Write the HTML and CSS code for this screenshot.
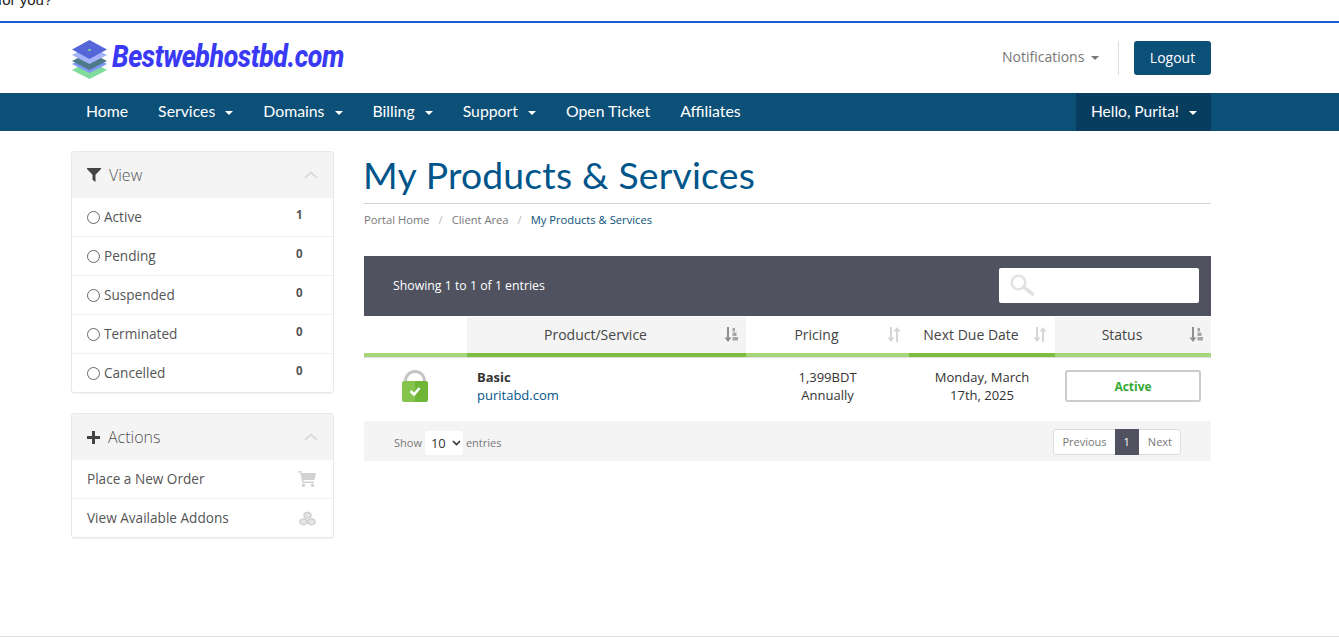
FILE: index.html
```html
<!DOCTYPE html>
<html lang="en">
<head>
    <meta charset="UTF-8">
    <meta name="viewport" content="width=device-width, initial-scale=1.0">
    <title>My Products &amp; Services</title>
    <link rel="stylesheet" href="styles.css">
</head>
<body>
    <div class="top-strip"><span>for you?</span></div>

    <header class="site-header">
        <div class="container header-row">
            <a class="logo" href="#">
                <svg class="logo-mark" width="37" height="40" viewBox="0 0 37 40">
                    <path d="M18.500 21 L36 30 L18.500 39 L1 30 Z" fill="#7fdc9c"/>
                    <path d="M18.500 15 L36 24 L18.500 33 L1 24 Z" fill="#7f96f5"/>
                    <path d="M18.500 12 L36 21 L18.500 30 L1 21 Z" fill="#4f7a8c"/>
                    <path d="M18.500 6 L36 15 L18.500 24 L1 15 Z" fill="#a5b4fa"/>
                    <path d="M18.500 0 L36 9.500 L18.500 19 L1 9.500 Z" fill="#5566d8"/>
                    <path d="M17 9 h3 v2 h-3 Z" fill="#6fc0a0"/>
                </svg>
                <span class="logo-text">Bestwebhostbd.com</span>
            </a>
            <div class="header-actions">
                <a class="notifications" href="#">Notifications <i class="caret"></i></a>
                <a class="btn-logout" href="#">Logout</a>
            </div>
        </div>
    </header>

    <nav class="main-nav">
        <div class="container nav-row">
            <ul class="nav-list">
                <li><a href="#">Home</a></li>
                <li><a href="#">Services <i class="caret"></i></a></li>
                <li><a href="#">Domains <i class="caret"></i></a></li>
                <li><a href="#">Billing <i class="caret"></i></a></li>
                <li><a href="#">Support <i class="caret"></i></a></li>
                <li><a href="#">Open Ticket</a></li>
                <li><a href="#">Affiliates</a></li>
            </ul>
            <a class="nav-user" href="#">Hello, Purita! <i class="caret"></i></a>
        </div>
    </nav>

    <div class="container page-body">
        <aside class="sidebar">
            <div class="panel">
                <div class="panel-heading">
                    <svg class="panel-icon" width="14" height="14" viewBox="0 0 14 14"><path d="M0 0 H14 V1 L8.500 6.800 V14 L5.500 11.800 V6.800 L0 1 Z" fill="#444"/></svg>
                    <span class="panel-title">View</span>
                    <svg class="panel-chevron" width="14" height="8" viewBox="0 0 14 8"><path d="M1 7 L7 1.500 L13 7" fill="none" stroke="#dcdcdc" stroke-width="2"/></svg>
                </div>
                <a class="panel-row" href="#"><i class="radio"></i><span class="row-label">Active</span><span class="count">1</span></a>
                <a class="panel-row" href="#"><i class="radio"></i><span class="row-label">Pending</span><span class="count">0</span></a>
                <a class="panel-row" href="#"><i class="radio"></i><span class="row-label">Suspended</span><span class="count">0</span></a>
                <a class="panel-row" href="#"><i class="radio"></i><span class="row-label">Terminated</span><span class="count">0</span></a>
                <a class="panel-row" href="#"><i class="radio"></i><span class="row-label">Cancelled</span><span class="count">0</span></a>
            </div>

            <div class="panel">
                <div class="panel-heading">
                    <svg class="panel-icon" width="13" height="13" viewBox="0 0 13 13"><path d="M5 0 H8 V5 H13 V8 H8 V13 H5 V8 H0 V5 H5 Z" fill="#444"/></svg>
                    <span class="panel-title">Actions</span>
                    <svg class="panel-chevron" width="14" height="8" viewBox="0 0 14 8"><path d="M1 7 L7 1.500 L13 7" fill="none" stroke="#dcdcdc" stroke-width="2"/></svg>
                </div>
                <a class="panel-row" href="#">
                    <span class="row-label">Place a New Order</span>
                    <svg class="row-icon" width="18" height="16" viewBox="0 0 18 16"><path d="M0 0 H3.200 L3.700 2 H18 L16.500 9 H5.200 L5.500 10.500 H16 V12 H4.200 L2.200 1.500 H0 Z" fill="#d2d2d2"/><circle cx="5.500" cy="14.300" r="1.700" fill="#d2d2d2"/><circle cx="14.500" cy="14.300" r="1.700" fill="#d2d2d2"/></svg>
                </a>
                <a class="panel-row" href="#">
                    <span class="row-label">View Available Addons</span>
                    <svg class="row-icon" width="17" height="15" viewBox="0 0 17 15"><g fill="#e4e4e4" stroke="#c4c4c4" stroke-width="1"><path d="M8.500 1 L12 2.500 V6 L8.500 7.500 L5 6 V2.500 Z"/><path d="M4.500 7.500 L8 9 V12.500 L4.500 14 L1 12.500 V9 Z"/><path d="M12.500 7.500 L16 9 V12.500 L12.500 14 L9 12.500 V9 Z"/></g></svg>
                </a>
            </div>
        </aside>

        <main class="content">
            <h1 class="page-title">My Products &amp; Services</h1>
            <ol class="breadcrumb">
                <li><a href="#">Portal Home</a></li>
                <li><a href="#">Client Area</a></li>
                <li class="current">My Products &amp; Services</li>
            </ol>

            <div class="table-bar">
                <span>Showing 1 to 1 of 1 entries</span>
                <label class="search-box">
                    <svg width="25" height="22" viewBox="0 0 25 22"><circle cx="8.500" cy="8.500" r="6.800" fill="none" stroke="#e2e2e2" stroke-width="2.600"/><path d="M13.500 13 L22.500 20" stroke="#e2e2e2" stroke-width="3.600" stroke-linecap="round"/></svg>
                </label>
            </div>

            <table class="services">
                <colgroup>
                    <col class="col-icon"><col class="col-product"><col class="col-price"><col class="col-date"><col class="col-status">
                </colgroup>
                <thead>
                    <tr>
                        <th></th>
                        <th class="shaded sorted">Product/Service
                            <svg class="sort" width="14" height="15" viewBox="0 0 14 15"><path d="M3 0 H5 V10.500 H7.500 L4 15 L0.500 10.500 H3 Z" fill="#8f8f8f"/><path d="M8.500 1 H11 V4.500 H8.500 Z M8.500 5.500 H12.500 V9 H8.500 Z M8.500 10 H14 V13.500 H8.500 Z" fill="#a6a6a6"/></svg>
                        </th>
                        <th>Pricing
                            <svg class="sort" width="14" height="15" viewBox="0 0 14 15"><path d="M3 0 H5 V10.500 H7.500 L4 15 L0.500 10.500 H3 Z M9 15 H11 V4.500 H13.500 L10 0 L6.500 4.500 H9 Z" fill="#d6d6d6"/></svg>
                        </th>
                        <th class="sorted">Next Due Date
                            <svg class="sort" width="14" height="15" viewBox="0 0 14 15"><path d="M3 0 H5 V10.500 H7.500 L4 15 L0.500 10.500 H3 Z M9 15 H11 V4.500 H13.500 L10 0 L6.500 4.500 H9 Z" fill="#d6d6d6"/></svg>
                        </th>
                        <th class="shaded">Status
                            <svg class="sort" width="14" height="15" viewBox="0 0 14 15"><path d="M3 0 H5 V10.500 H7.500 L4 15 L0.500 10.500 H3 Z" fill="#8f8f8f"/><path d="M8.500 1 H11 V4.500 H8.500 Z M8.500 5.500 H12.500 V9 H8.500 Z M8.500 10 H14 V13.500 H8.500 Z" fill="#a6a6a6"/></svg>
                        </th>
                    </tr>
                </thead>
                <tbody>
                    <tr>
                        <td class="lock-cell">
                            <svg width="26" height="32" viewBox="0 0 26 32"><path d="M3.500 14 V11 A9.500 9.500 0 0 1 22.500 11 V14" fill="none" stroke="#c4c4c4" stroke-width="3"/><path d="M13 11 H2 A2 2 0 0 0 0 13 V30 A2 2 0 0 0 2 32 H13 Z" fill="#84c44c"/><path d="M13 11 H24 A2 2 0 0 1 26 13 V30 A2 2 0 0 1 24 32 H13 Z" fill="#6fb637"/><path d="M8.500 21 L12 24.500 L17.500 18" fill="none" stroke="#fff" stroke-width="2.600"/></svg>
                        </td>
                        <td class="product-cell"><strong>Basic</strong><a href="#">puritabd.com</a></td>
                        <td class="center-cell">1,399BDT<br>Annually</td>
                        <td class="center-cell">Monday, March<br>17th, 2025</td>
                        <td class="status-cell"><span class="status-label">Active</span></td>
                    </tr>
                </tbody>
            </table>

            <div class="table-footer">
                <div class="length">Show <span class="length-select">10 <svg width="9" height="6" viewBox="0 0 9 6"><path d="M1 1 L4.500 4.500 L8 1" fill="none" stroke="#333" stroke-width="1.600"/></svg></span> entries</div>
                <div class="pager">
                    <a href="#">Previous</a><a class="active" href="#">1</a><a href="#">Next</a>
                </div>
            </div>
        </main>
    </div>

    <div class="footer-line"></div>
</body>
</html>
```

FILE: styles.css
```css
* {
    box-sizing: border-box;
}

html, body {
    height: 100%;
}

body {
    margin: 0;
    font-family: "Open Sans", sans-serif;
    font-size: 13px;
    color: #333;
    background-color: #fff;
    display: flex;
    flex-direction: column;
    overflow: hidden;
}

a {
    color: inherit;
    text-decoration: none;
}

.container {
    width: 1140px;
    margin-left: 71px;
}

.caret {
    display: inline-block;
    width: 0;
    height: 0;
    margin-left: 6px;
    vertical-align: middle;
    border-top: 4px solid currentColor;
    border-left: 4px solid transparent;
    border-right: 4px solid transparent;
}

/* top strip */
.top-strip {
    height: 23px;
    flex: none;
    overflow: hidden;
    border-bottom: 2px solid #1a5fd0;
    font-family: "Liberation Sans", sans-serif;
    font-size: 15px;
    color: #222;
}

.top-strip span {
    display: block;
    margin: -10px 0 0 -2px;
    line-height: 20px;
}

/* header */
.site-header {
    height: 70px;
    flex: none;
}

.header-row {
    height: 100%;
    display: flex;
    align-items: center;
    justify-content: space-between;
}

.logo {
    display: flex;
    align-items: center;
    gap: 3px;
    margin-top: 3px;
}

.logo-mark {
    margin-top: 1px;
}

.logo-text {
    display: block;
    font-family: Roboto, sans-serif;
    font-size: 32px;
    font-weight: 800;
    font-style: italic;
    color: #3a3af5;
    letter-spacing: -0.5px;
    margin-top: -7px;
    margin-left: 1px;
    transform: scaleX(0.835);
    transform-origin: left center;
}

.header-actions {
    display: flex;
    align-items: center;
}

.notifications {
    font-size: 14px;
    color: #777;
    padding-right: 19px;
    height: 34px;
    line-height: 32px;
    border-right: 1px solid #ddd;
    margin-right: 15px;
}

.notifications .caret {
    margin-left: 3px;
}

.btn-logout {
    width: 77px;
    height: 34px;
    line-height: 34px;
    text-align: center;
    font-size: 14px;
    font-weight: 500;
    color: #fff;
    background-color: #0c5078;
    border-radius: 3px;
}

/* main nav */
.main-nav {
    height: 38px;
    flex: none;
    background-color: #0c5078;
    color: #fff;
    font-family: Lato, sans-serif;
    font-size: 15.800px;
}

.nav-row {
    height: 100%;
    display: flex;
    justify-content: space-between;
}

.nav-list {
    display: flex;
    margin: 0;
    padding: 0;
    list-style: none;
}

.nav-list a, .nav-user {
    display: block;
    height: 38px;
    line-height: 36px;
    padding: 0 15px;
}

.nav-user {
    width: 135px;
    white-space: nowrap;
    font-size: 15.500px;
    background-color: #073e60;
}

/* page */
.page-body {
    flex: 1;
    display: flex;
    gap: 30px;
    padding-top: 20px;
    min-height: 0;
}

.sidebar {
    width: 263px;
    flex: none;
}

.panel {
    border: 1px solid #e8e8e8;
    border-radius: 3px;
    box-shadow: 0 1px 1px rgba(0, 0, 0, 0.05);
    margin-bottom: 20px;
}

.panel-heading {
    height: 46px;
    display: flex;
    align-items: center;
    padding: 0 15px;
    background-color: #f4f4f4;
    font-size: 16px;
    font-weight: 300;
    color: #555;
}

.panel-icon {
    margin-right: 8px;
}

.panel-title {
    flex: 1;
}

.panel-row {
    height: 39px;
    display: flex;
    align-items: center;
    padding: 0 15px;
    font-size: 13.600px;
    color: #555;
    border-top: 1px solid #f2f2f2;
}

.panel-heading + .panel-row {
    border-top: 0;
    height: 38px;
}

.row-label {
    flex: 1;
    padding-bottom: 2px;
}

.row-icon {
    margin-right: 2px;
}

.radio {
    width: 13px;
    height: 13px;
    margin-right: 4px;
    border: 1px solid #666;
    border-radius: 50%;
}

.count {
    width: 22px;
    margin-top: -5px;
    font-size: 11.500px;
    font-weight: 700;
    color: #555;
}

/* content */
.content {
    width: 847px;
    flex: none;
}

.page-title {
    margin: 0;
    height: 53px;
    line-height: 48px;
    font-family: Lato, sans-serif;
    font-size: 37.300px;
    letter-spacing: 0.2px;
    font-weight: 400;
    color: #00558a;
    border-bottom: 1px solid #d4d4d4;
    text-indent: -1px;
}

.breadcrumb {
    display: flex;
    margin: 0;
    padding: 0;
    height: 52px;
    list-style: none;
    font-size: 11.200px;
    line-height: 31px;
    color: #777;
}

.breadcrumb li + li::before {
    content: "/";
    padding: 0 9px;
    color: #bbb;
}

.breadcrumb .current {
    color: #0c5078;
}

.table-bar {
    height: 60px;
    display: flex;
    align-items: center;
    justify-content: space-between;
    padding: 0 12px 2px 29px;
    background-color: #50535f;
    color: #fff;
    font-size: 12.300px;
}

.search-box {
    width: 200px;
    height: 35px;
    display: flex;
    align-items: center;
    padding-left: 11px;
    background-color: #fff;
    border-radius: 2px;
}

/* table */
.services {
    width: 100%;
    border-collapse: separate;
    border-spacing: 0;
    table-layout: fixed;
    margin-top: 1px;
}

.col-icon { width: 103px; }
.col-product { width: 279px; }
.col-price { width: 163px; }
.col-date { width: 146px; }
.col-status { width: 156px; }

.services th {
    position: relative;
    height: 40px;
    padding: 0 22px 2px 0;
    font-size: 14px;
    font-weight: 400;
    text-align: center;
    color: #444;
    border-bottom: 4px solid #a6d57c;
}

.services th.shaded {
    background-color: #f4f4f4;
}

.services th.sorted {
    border-bottom-color: #7cbd42;
}

.sort {
    position: absolute;
    right: 8px;
    top: 10px;
}

.services td {
    height: 64px;
    padding: 0 0 8px;
    vertical-align: middle;
    line-height: 18px;
    border-top: 1px solid #ddd;
}

.services .lock-cell {
    padding-right: 1px;
    text-align: center;
}

.lock-cell svg {
    display: block;
    margin: 0 auto;
}

.product-cell {
    padding-left: 10px !important;
}

.product-cell strong, .product-cell a {
    display: block;
}

.product-cell a {
    color: #00558a;
}

.center-cell {
    text-align: center;
}

.status-cell {
    padding-left: 10px !important;
}

.status-label {
    display: block;
    width: 136px;
    height: 32px;
    line-height: 30px;
    text-align: center;
    font-size: 12px;
    font-weight: 700;
    color: #35a935;
    border: 2px solid #ccc;
    border-radius: 3px;
}

.table-footer {
    height: 40px;
    display: flex;
    align-items: center;
    justify-content: space-between;
    padding: 0 30px 0 30px;
    background-color: #f4f4f4;
    font-size: 11px;
    color: #777;
}

.length {
    display: flex;
    align-items: center;
    margin-top: 3px;
}

.length-select {
    display: inline-flex;
    align-items: center;
    gap: 6px;
    width: 38px;
    height: 24px;
    margin: 0 3px;
    padding-left: 6px;
    background-color: #fff;
    border-radius: 3px;
    color: #333;
    font-size: 13px;
}

.pager {
    display: flex;
    height: 26px;
    margin-top: 1px;
    line-height: 24px;
    border: 1px solid #ddd;
    border-radius: 3px;
    background-color: #fff;
}

.pager a {
    padding: 0 8px 0 9px;
}

.pager a:first-child {
    padding-left: 8px;
}

.pager .active {
    padding: 0 9px;
    margin: -1px 0;
    line-height: 26px;
    background-color: #50535f;
    color: #fff;
}

.footer-line {
    height: 1px;
    flex: none;
    margin-bottom: 0;
    background-color: #ddd;
}
```
